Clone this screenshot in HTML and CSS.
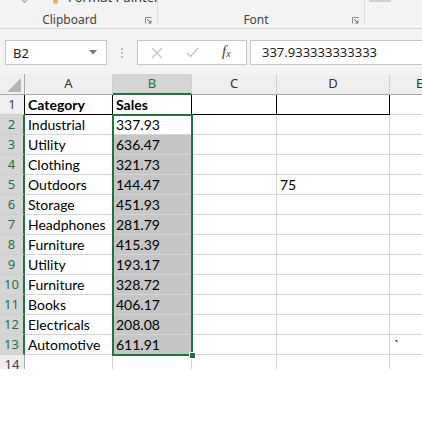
FILE: index.html
```html
<!DOCTYPE html>
<html>
<head>
<meta charset="utf-8">
<link rel="stylesheet" href="styles.css">
</head>
<body>
<div class="app">
  <div class="ribbon">
    <div class="group clip">
      <div class="cut">
        <span class="arrow-small"></span>
        <span class="brush"></span>
        <span class="cut-text">Format Painter</span>
      </div>
      <div class="glabel">Clipboard</div>
      <span class="launcher"><svg width="7" height="7" viewBox="0 0 7 7"><path d="M0.5 6.5V0.5H6.5" fill="none" stroke="#8a8a8a"/><path d="M2 2L6 6M6 3.5V6H3.5" fill="none" stroke="#6a6a6a"/></svg></span>
    </div>
    <div class="group font">
      <div class="cut"></div>
      <div class="glabel">Font</div>
      <span class="launcher"><svg width="7" height="7" viewBox="0 0 7 7"><path d="M0.5 6.5V0.5H6.5" fill="none" stroke="#8a8a8a"/><path d="M2 2L6 6M6 3.5V6H3.5" fill="none" stroke="#6a6a6a"/></svg></span>
    </div>
    <div class="group rest"><span class="topbox"></span></div>
  </div>

  <div class="fbar">
    <div class="namebox">
      <span class="nb-text">B2</span>
      <svg class="dd" width="8" height="5" viewBox="0 0 8 5"><path d="M0 0H8L4 4.5Z" fill="#777"/></svg>
    </div>
    <div class="dots"><i></i><i></i><i></i></div>
    <div class="btns">
      <svg width="12" height="12" viewBox="0 0 12 12"><path d="M1 1L11 11M11 1L1 11" stroke="#c4c4c4" stroke-width="1.3"/></svg>
      <svg width="13" height="11" viewBox="0 0 13 11"><path d="M1 6L4.5 9.5L12 1" fill="none" stroke="#c4c4c4" stroke-width="1.4"/></svg>
      <span class="fx">f<sub>x</sub></span>
    </div>
    <div class="finput">337.933333333333</div>
  </div>

  <div class="sheet">
    <div class="grid">
      <div class="corner"><svg width="14" height="14" viewBox="0 0 14 14"><path d="M14 0V14H0Z" fill="#b5b5b5"/></svg></div>
      <div class="ch">A</div>
      <div class="ch sel">B</div>
      <div class="ch">C</div>
      <div class="ch">D</div>
      <div class="ch">E</div>

      <div class="rh r1">1</div>
      <div class="c b1 bold">Category</div>
      <div class="c b1 bold">Sales</div>
      <div class="c b1"></div>
      <div class="c b1"></div>
      <div class="c"></div>

      <div class="rh sel">2</div><div class="c">Industrial</div><div class="c">337.93</div><div class="c"></div><div class="c"></div><div class="c"></div>
      <div class="rh sel">3</div><div class="c">Utility</div><div class="c g">636.47</div><div class="c"></div><div class="c"></div><div class="c"></div>
      <div class="rh sel">4</div><div class="c">Clothing</div><div class="c g">321.73</div><div class="c"></div><div class="c"></div><div class="c"></div>
      <div class="rh sel">5</div><div class="c">Outdoors</div><div class="c g">144.47</div><div class="c"></div><div class="c">75</div><div class="c"></div>
      <div class="rh sel">6</div><div class="c">Storage</div><div class="c g">451.93</div><div class="c"></div><div class="c"></div><div class="c"></div>
      <div class="rh sel">7</div><div class="c">Headphones</div><div class="c g">281.79</div><div class="c"></div><div class="c"></div><div class="c"></div>
      <div class="rh sel">8</div><div class="c">Furniture</div><div class="c g">415.39</div><div class="c"></div><div class="c"></div><div class="c"></div>
      <div class="rh sel">9</div><div class="c">Utility</div><div class="c g">193.17</div><div class="c"></div><div class="c"></div><div class="c"></div>
      <div class="rh sel">10</div><div class="c">Furniture</div><div class="c g">328.72</div><div class="c"></div><div class="c"></div><div class="c"></div>
      <div class="rh sel">11</div><div class="c">Books</div><div class="c g">406.17</div><div class="c"></div><div class="c"></div><div class="c"></div>
      <div class="rh sel">12</div><div class="c">Electricals</div><div class="c g">208.08</div><div class="c"></div><div class="c"></div><div class="c"></div>
      <div class="rh sel">13</div><div class="c">Automotive</div><div class="c g">611.91</div><div class="c"></div><div class="c"></div><div class="c tick">`</div>
      <div class="rh">14</div><div class="c"></div><div class="c"></div><div class="c"></div><div class="c"></div><div class="c"></div>
    </div>
    <div class="selbox"><span class="handle"></span></div>
  </div>
</div>
</body>
</html>
```

FILE: styles.css
```css
* { box-sizing: border-box; }
html, body { margin: 0; padding: 0; background: #ffffff; }
.app { width: 422px; height: 443px; overflow: hidden; background: #ffffff; }

.ribbon {
  height: 29px;
  background: #f3f3f3;
  border-bottom: 1px solid #d6d6d6;
  display: flex;
  font-family: "Noto Sans", "Open Sans", sans-serif;
  font-size: 12px;
  color: #444;
}
.group { position: relative; height: 24px; border-right: 1px solid #dadada; }
.group.clip { width: 158px; }
.group.font { width: 207px; }
.group.rest { flex: 1; border-right: none; }
.cut { height: 10px; position: relative; overflow: hidden; }
.arrow-small { position: absolute; left: 22px; top: -3px; width: 5px; height: 5px; border-right: 1px solid #999; border-bottom: 1px solid #999; transform: rotate(45deg); }
.brush { position: absolute; left: 53px; top: -3px; width: 5px; height: 7px; background: #e8b45a; border-radius: 0 0 3px 3px; }
.cut-text { position: absolute; left: 68px; top: -12px; font-size: 13px; line-height: 18px; color: #333; white-space: nowrap; }
.glabel { text-align: center; line-height: 14px; margin-top: 3px; }
.clip .glabel { padding-right: 18px; }
.font .glabel { padding-right: 10px; }
.launcher { position: absolute; right: 5px; top: 17px; width: 7px; height: 7px; display: block; line-height: 0; }
.topbox { position: absolute; left: 4px; top: 0; width: 22px; height: 2px; background: #d0d0d0; }

.fbar {
  height: 45px;
  background: #f3f3f3;
  display: flex;
  align-items: flex-start;
  padding-top: 11px;
  padding-left: 5px;
  font-family: "Noto Sans", "Open Sans", sans-serif;
  font-size: 13px;
  color: #222;
}
.namebox {
  width: 102px; height: 25px;
  background: #fff;
  border: 1px solid #c6c6c6;
  display: flex; align-items: center; justify-content: space-between;
  padding: 0 9px 0 7px;
}
.nb-text { line-height: 20px; }
.dd { display: block; }
.dots { width: 30px; height: 25px; display: flex; flex-direction: column; align-items: center; justify-content: center; gap: 2px; }
.dots i { display: block; width: 2px; height: 2px; background: #b9b9b9; }
.btns {
  width: 110px; height: 25px;
  background: #fff;
  border: 1px solid #c6c6c6;
  display: flex; align-items: center;
  padding-left: 13px;
  gap: 23px;
}
.btns svg { display: block; }
.fx { font-family: "Liberation Serif", serif; font-style: italic; font-size: 15px; color: #444; line-height: 14px; }
.fx sub { font-size: 10px; vertical-align: -1px; }
.finput {
  flex: 1; height: 25px;
  margin-left: 3px;
  background: #fff;
  border: 1px solid #c6c6c6;
  border-right: none;
  padding-left: 11px;
  line-height: 22px;
}

.sheet { position: relative; height: 295px; overflow: hidden; }
.grid {
  display: grid;
  grid-template-columns: 25px 88px 79px 85px 113px 60px;
  grid-template-rows: 21px repeat(14, 20px);
  font-family: Lato, "Liberation Sans", sans-serif;
  font-size: 14px;
  color: #000;
}
.corner { background: #efefef; border-right: 1px solid #ababab; border-bottom: 1px solid #ababab; display: flex; align-items: flex-end; justify-content: flex-end; padding: 0 3px 2px 0; }
.corner svg { display: block; }
.ch {
  background: #efefef;
  border-right: 1px solid #d0d0d0;
  border-bottom: 1px solid #ababab;
  text-align: center;
  font-family: "Noto Sans", "Open Sans", sans-serif;
  font-size: 13px;
  line-height: 19px;
  color: #333;
}
.ch.sel { background: #d5d5d5; color: #217346; border-bottom: 2px solid #217346; }
.rh {
  background: #efefef;
  border-right: 1px solid #ababab;
  border-bottom: 1px solid #d0d0d0;
  text-align: center;
  font-family: "Noto Sans", "Open Sans", sans-serif;
  font-size: 13px;
  line-height: 19px;
  color: #444;
}
.rh.r1 { border-right: 1px solid #000; }
.rh.sel { background: #d5d5d5; color: #217346; border-right: 2px solid #217346; }
.c {
  border-right: 1px solid #d4d4d4;
  border-bottom: 1px solid #d4d4d4;
  padding-left: 3px;
  line-height: 19px;
  white-space: nowrap;
  overflow: hidden;
}
.c.b1 { border-right: 1px solid #000; border-bottom: 1px solid #000; }
.bold { font-weight: 700; }
.c.g { background: #c6c6c6; }
.tick { padding-left: 4px; font-size: 14px; line-height: 19px; }

.selbox {
  position: absolute;
  left: 112px; top: 40px;
  width: 81px; height: 242px;
  border: 2px solid #217346;
  pointer-events: none;
}
.handle {
  position: absolute;
  right: -5px; bottom: -5px;
  width: 7px; height: 7px;
  background: #217346;
  border: 1px solid #fff;
}
```
